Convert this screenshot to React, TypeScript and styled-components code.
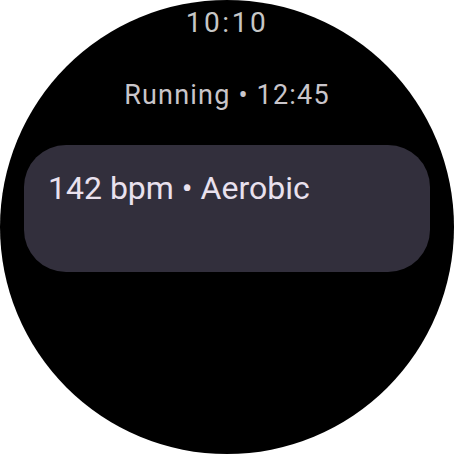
import React from "react";
import styled, { createGlobalStyle } from "styled-components";

const GlobalStyle = createGlobalStyle`
  html, body {
    margin: 0;
    padding: 0;
    background: #ffffff;
  }
  * {
    box-sizing: border-box;
  }
`;

const Screen = styled.div`
  width: 454px;
  height: 454px;
  background: #ffffff;
  overflow: hidden;
`;

const Watch = styled.div`
  width: 454px;
  height: 454px;
  border-radius: 50%;
  background: #000000;
  display: flex;
  flex-direction: column;
  align-items: center;
  font-family: Roboto, "Noto Sans", sans-serif;
`;

const TimeText = styled.div`
  margin-top: 8px;
  height: 30px;
  font-size: 28px;
  line-height: 30px;
  letter-spacing: 2.6px;
  color: #c6c6c6;
`;

const Title = styled.div`
  margin-top: 42px;
  font-size: 27px;
  line-height: 30px;
  letter-spacing: 1.2px;
  color: #c9c5ca;
`;

const Card = styled.div`
  margin-top: 35px;
  align-self: flex-start;
  margin-left: 24px;
  width: 406px;
  height: 127px;
  border-radius: 42px;
  background: #322f3c;
  padding: 25px 24px;
`;

const CardText = styled.div`
  font-size: 32px;
  line-height: 36px;
  color: #e9e1ee;
`;

export default function App() {
  return (
    <Screen>
      <GlobalStyle />
      <Watch>
        <TimeText>10:10</TimeText>
        <Title>Running • 12:45</Title>
        <Card>
          <CardText>142 bpm • Aerobic</CardText>
        </Card>
      </Watch>
    </Screen>
  );
}
